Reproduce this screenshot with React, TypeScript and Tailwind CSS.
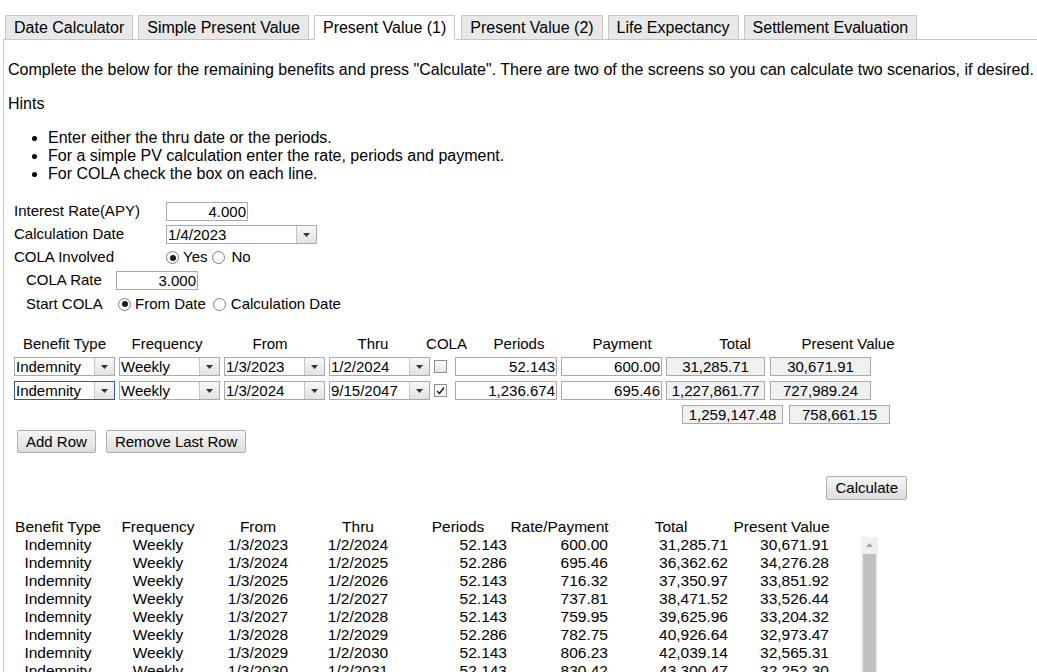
import React from "react";

type Sched = {
  from: string;
  thru: string;
  periods: string;
  payment: string;
  total: string;
  pv: string;
};

const tabs = [
  "Date Calculator",
  "Simple Present Value",
  "Present Value (1)",
  "Present Value (2)",
  "Life Expectancy",
  "Settlement Evaluation",
];

const schedule: Sched[] = [
  { from: "1/3/2023", thru: "1/2/2024", periods: "52.143", payment: "600.00", total: "31,285.71", pv: "30,671.91" },
  { from: "1/3/2024", thru: "1/2/2025", periods: "52.286", payment: "695.46", total: "36,362.62", pv: "34,276.28" },
  { from: "1/3/2025", thru: "1/2/2026", periods: "52.143", payment: "716.32", total: "37,350.97", pv: "33,851.92" },
  { from: "1/3/2026", thru: "1/2/2027", periods: "52.143", payment: "737.81", total: "38,471.52", pv: "33,526.44" },
  { from: "1/3/2027", thru: "1/2/2028", periods: "52.143", payment: "759.95", total: "39,625.96", pv: "33,204.32" },
  { from: "1/3/2028", thru: "1/2/2029", periods: "52.286", payment: "782.75", total: "40,926.64", pv: "32,973.47" },
  { from: "1/3/2029", thru: "1/2/2030", periods: "52.143", payment: "806.23", total: "42,039.14", pv: "32,565.31" },
  { from: "1/3/2030", thru: "1/2/2031", periods: "52.143", payment: "830.42", total: "43,300.47", pv: "32,252.30" },
];

function Arrow() {
  return (
    <svg width="7" height="4" viewBox="0 0 7 4">
      <path d="M0 0h7L3.5 4z" fill="#333" />
    </svg>
  );
}

function Select({ value, width, focus }: { value: string; width: string; focus?: boolean }) {
  return (
    <div
      className={`flex h-[19px] ${width} border bg-white ${
        focus ? "border-[#2f5d96]" : "border-[#a9a9a9]"
      }`}
    >
      <span className="flex-1 overflow-hidden whitespace-nowrap pl-[1px] text-[15px] leading-[17px]">
        {value}
      </span>
      <span className="flex w-[20px] items-center justify-center border-l border-[#c4c4c4] bg-gradient-to-b from-[#f8f8f8] to-[#e2e2e2]">
        <Arrow />
      </span>
    </div>
  );
}

function Radio({ checked }: { checked?: boolean }) {
  return (
    <span className="flex h-[13px] w-[13px] items-center justify-center rounded-full border border-[#7d7d7d] bg-white">
      {checked && <span className="h-[6px] w-[6px] rounded-full bg-[#1a1a1a]" />}
    </span>
  );
}

function Checkbox({ checked }: { checked?: boolean }) {
  return (
    <span
      className={`flex h-[13px] w-[13px] items-center justify-center border border-[#8e8e8e] ${
        checked ? "bg-white" : "bg-gradient-to-b from-[#fbfbfb] to-[#e6e6e6]"
      }`}
    >
      {checked && (
        <svg width="9" height="9" viewBox="0 0 9 9">
          <path d="M1 5l2.5 2.5L8 1.5" fill="none" stroke="#111" strokeWidth="1.4" />
        </svg>
      )}
    </span>
  );
}

function TextBox({ value, width }: { value: string; width: string }) {
  return (
    <div
      className={`h-[19px] ${width} border border-[#a9a9a9] bg-white pr-[1px] text-right text-[15px] leading-[17px]`}
    >
      {value}
    </div>
  );
}

function ReadBox({ value, width }: { value: string; width: string }) {
  return (
    <div
      className={`h-[19px] ${width} whitespace-nowrap border border-[#a9a9a9] bg-[#f0f0f0] text-center text-[15px] leading-[17px]`}
    >
      {value}
    </div>
  );
}

function Button({ label, tall }: { label: string; tall?: boolean }) {
  return (
    <button
      className={`${
        tall ? "h-[24px]" : "h-[23px]"
      } rounded-[2px] border border-[#adadad] bg-gradient-to-b from-[#f5f5f5] to-[#dedede] px-[8px] text-[15px] leading-[20px] text-black`}
    >
      {label}
    </button>
  );
}

function BenefitRow({
  from,
  thru,
  cola,
  periods,
  payment,
  total,
  pv,
  focus,
}: {
  from: string;
  thru: string;
  cola?: boolean;
  periods: string;
  payment: string;
  total: string;
  pv: string;
  focus?: boolean;
}) {
  return (
    <div className="flex items-center">
      <Select value="Indemnity" width="w-[101px]" focus={focus} />
      <div className="ml-[4px]">
        <Select value="Weekly" width="w-[101px]" />
      </div>
      <div className="ml-[4px]">
        <Select value={from} width="w-[101px]" />
      </div>
      <div className="ml-[4px]">
        <Select value={thru} width="w-[101px]" />
      </div>
      <div className="ml-[4px]">
        <Checkbox checked={cola} />
      </div>
      <div className="ml-[8px]">
        <TextBox value={periods} width="w-[102px]" />
      </div>
      <div className="ml-[4px]">
        <TextBox value={payment} width="w-[101px]" />
      </div>
      <div className="ml-[4px]">
        <ReadBox value={total} width="w-[99px]" />
      </div>
      <div className="ml-[5px]">
        <ReadBox value={pv} width="w-[101px]" />
      </div>
    </div>
  );
}

export default function App() {
  return (
    <div className="min-h-screen bg-white pt-[15px] font-['Liberation_Sans',Arial,sans-serif] text-black">
      <div className="ml-[3px]">
        {/* Tabs */}
        <div className="relative z-10 -mb-px flex items-end pl-[2px]">
          {tabs.map((t) => {
            const active = t === "Present Value (1)";
            return (
              <div
                key={t}
                className={`h-[25px] whitespace-nowrap border border-[#c6c6c6] px-[8px] text-[16px] leading-[23px] ${
                  active ? "mr-[6px] border-b-white bg-white" : "mr-[5px] bg-[#e8e8e8]"
                }`}
              >
                {t}
              </div>
            );
          })}
        </div>

        {/* Panel */}
        <div className="border-l border-t border-[#c6c6c6] pb-[40px] pl-[4px] pt-[21px]">
          <p className="whitespace-nowrap text-[16px] leading-[18px]">
            Complete the below for the remaining benefits and press "Calculate". There are two of
            the screens so you can calculate two scenarios, if desired.
          </p>
          <p className="mt-[16px] text-[16px] leading-[18px]">Hints</p>
          <ul className="mt-[16px] list-disc pl-[40px] text-[16px] leading-[18px]">
            <li>Enter either the thru date or the periods.</li>
            <li>For a simple PV calculation enter the rate, periods and payment.</li>
            <li>For COLA check the box on each line.</li>
          </ul>

          <div className="mt-[16px] pl-[6px] text-[15px]">
            {/* Settings */}
            <div className="flex h-[24px] items-center">
              <span className="w-[152px]">Interest Rate(APY)</span>
              <TextBox value="4.000" width="w-[82px]" />
            </div>
            <div className="flex h-[23px] items-center">
              <span className="w-[152px]">Calculation Date</span>
              <Select value="1/4/2023" width="w-[151px]" />
            </div>
            <div className="flex h-[23px] items-center">
              <span className="w-[152px]">COLA Involved</span>
              <Radio checked />
              <span className="ml-[4px]">Yes</span>
              <span className="ml-[5px]">
                <Radio />
              </span>
              <span className="ml-[6px]">No</span>
            </div>
            <div className="flex h-[23px] items-center pl-[12px]">
              <span className="w-[90px]">COLA Rate</span>
              <TextBox value="3.000" width="w-[82px]" />
            </div>
            <div className="flex h-[24px] items-center pl-[12px]">
              <span className="w-[92px]">Start COLA</span>
              <Radio checked />
              <span className="ml-[4px]">From Date</span>
              <span className="ml-[7px]">
                <Radio />
              </span>
              <span className="ml-[5px]">Calculation Date</span>
            </div>

            {/* Benefit entry grid */}
            <div className="mt-[18px] flex h-[20px] items-center text-center leading-[20px]">
              <span className="w-[101px]">Benefit Type</span>
              <span className="w-[104px]">Frequency</span>
              <span className="w-[102px]">From</span>
              <span className="w-[104px]">Thru</span>
              <span className="w-[43px]">COLA</span>
              <span className="w-[102px]">Periods</span>
              <span className="w-[104px]">Payment</span>
              <span className="w-[122px]">Total</span>
              <span className="w-[104px]">Present Value</span>
            </div>
            <div className="mt-[3px] flex flex-col gap-[5px]">
              <BenefitRow
                from="1/3/2023"
                thru="1/2/2024"
                periods="52.143"
                payment="600.00"
                total="31,285.71"
                pv="30,671.91"
              />
              <BenefitRow
                from="1/3/2024"
                thru="9/15/2047"
                cola
                focus
                periods="1,236.674"
                payment="695.46"
                total="1,227,861.77"
                pv="727,989.24"
              />
              <div className="flex pl-[668px]">
                <ReadBox value="1,259,147.48" width="w-[101px]" />
                <div className="ml-[6px]">
                  <ReadBox value="758,661.15" width="w-[101px]" />
                </div>
              </div>
            </div>

            <div className="mt-[6px] flex gap-[10px] pl-[3px]">
              <Button label="Add Row" />
              <Button label="Remove Last Row" />
            </div>

            <div className="mt-[23px] flex w-[893px] justify-end">
              <Button label="Calculate" tall />
            </div>

            {/* Schedule */}
            <div className="mt-[18px] flex h-[18px] text-center text-[15.5px] leading-[18px]">
              <span className="w-[88px]">Benefit Type</span>
              <span className="w-[112px]">Frequency</span>
              <span className="w-[88px]">From</span>
              <span className="w-[112px]">Thru</span>
              <span className="w-[96px] pr-[8px]">Periods</span>
              <span className="w-[102px] pr-[3px]">Rate/Payment</span>
              <span className="w-[118px]">Total</span>
              <span className="w-[103px]">Present Value</span>
            </div>
            <div className="flex w-[864px]">
              <div className="flex-1 text-[15.5px] leading-[18px]">
                {schedule.map((r) => (
                  <div key={r.from} className="flex whitespace-nowrap">
                    <span className="w-[88px] text-center">Indemnity</span>
                    <span className="w-[112px] text-center">Weekly</span>
                    <span className="w-[88px] text-center">{r.from}</span>
                    <span className="w-[112px] text-center">{r.thru}</span>
                    <span className="w-[96px] pr-[3px] text-right">{r.periods}</span>
                    <span className="w-[102px] pr-[4px] text-right">{r.payment}</span>
                    <span className="w-[118px] pr-[2px] text-right">{r.total}</span>
                    <span className="w-[103px] pr-[4px] text-right">{r.pv}</span>
                  </div>
                ))}
              </div>
              {/* scrollbar */}
              <div className="mt-[1px] flex w-[17px] flex-col bg-[#f0f0f0]">
                <div className="flex h-[16px] items-center justify-center">
                  <svg width="7" height="4" viewBox="0 0 7 4">
                    <path d="M0 4h7L3.5 0z" fill="#a3a3a3" />
                  </svg>
                </div>
                <div className="mx-[2px] mt-[1px] flex-1 bg-[#c1c1c1]" />
              </div>
            </div>
          </div>
        </div>
      </div>
    </div>
  );
}
